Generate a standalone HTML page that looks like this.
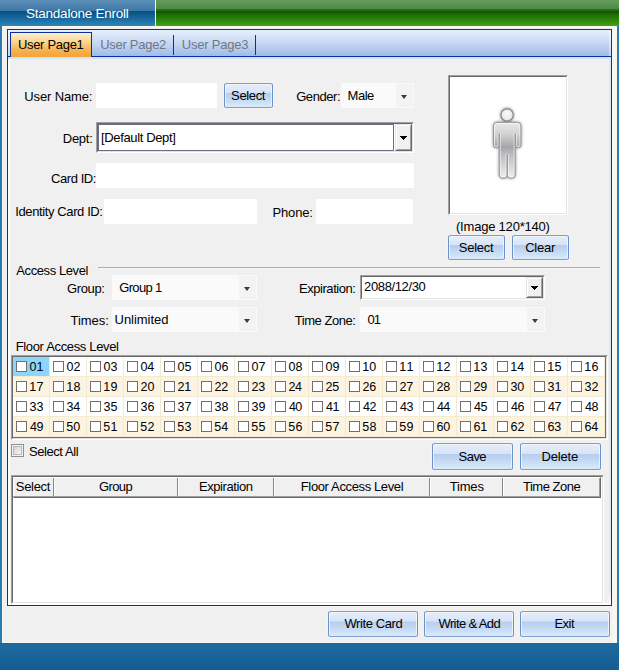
<!DOCTYPE html>
<html>
<head>
<meta charset="utf-8">
<title>Standalone Enroll</title>
<style>
html,body{margin:0;padding:0;}
body{width:619px;height:670px;overflow:hidden;position:relative;background:#f0f0f0;
 font-family:"Liberation Sans",Arial,sans-serif;font-size:13px;color:#000;}
.a{position:absolute;box-sizing:border-box;}
.t{position:absolute;white-space:nowrap;line-height:16px;font-size:13px;}
.s12{font-size:12px;}
/* window chrome */
#tb-blue{left:0;top:0;width:155px;height:26px;
 background:linear-gradient(to bottom,#5c90b9 0,#4c83ae 6px,#3d77a5 11px,#0a4b7c 11px,#0d5689 13px,#0f5d92 15px,#2f85b8 26px);}
#tb-gap{left:155px;top:0;width:1px;height:26px;background:#f4f6f8;}
#tb-green{left:156px;top:0;width:463px;height:26px;
 background:linear-gradient(to bottom,#659b5d 0,#4b8b41 9px,#2c6c1c 9px,#286818 11px,#0f5300 11px,#166100 13px,#1f7503 16px,#45a119 26px);}
#bl{left:0;top:26px;width:2px;height:617px;background:#2a7cb0;}
#br{left:617px;top:26px;width:2px;height:617px;background:#2a7cb0;}
#bb{left:0;top:643px;width:619px;height:27px;background:linear-gradient(to bottom,#0f5f98 0,#1e6ba1 1px,#135d93 27px);}
#pnl{left:2px;top:26px;width:615px;height:617px;background:#f9f6f0;}
#pnl2{left:3px;top:28px;width:609px;height:614px;background:#f0f0f0;}
/* tab control */
#tabc{left:7px;top:29px;width:605px;height:577px;border:1px solid #0c2f9c;background:#f0f0f0;}
#tabstrip{left:8px;top:30px;width:603px;height:26px;background:linear-gradient(to bottom,#e6effc 0,#c9daf5 12px,#9dbbea 26px);}
#tabline{left:8px;top:56px;width:603px;height:1px;background:#0c2f9c;}
#tablight{left:8px;top:57px;width:603px;height:2px;background:#d3e3f9;}
#tabL{left:8px;top:30px;width:2px;height:575px;background:linear-gradient(to bottom,#f4f8fe 0,#c5d7f3 26px,#dfe9f9 27px,#ffffff 31px);}
#tabR{left:609px;top:30px;width:2px;height:575px;background:linear-gradient(to bottom,#f4f8fe 0,#c5d7f3 26px,#dbe7fa 27px,#dbe7fa 560px,#fff 575px);}
#tabB{left:8px;top:603px;width:601px;height:2px;background:#fff;}
#tabU{left:7px;top:606px;width:605px;height:1px;background:#f9f6f0;}
#tab1{left:10px;top:32px;width:82px;height:25px;border:1px solid #0c2f9c;border-bottom:none;
 background:linear-gradient(to bottom,#fdf0cd 0,#fbd590 9px,#f5b04a 18px,#f2a236 25px);}
.tsep{width:1px;height:20px;top:35px;background:#0c2f9c;}
/* inputs */
.inp{background:#fff;}
.cb{background:#fafafa;}
.cbb{background:#f3f3f3;}
.arr{width:0;height:0;border-left:3.5px solid transparent;border-right:3.5px solid transparent;border-top:4px solid #3a3a3a;}
.arrk{width:0;height:0;border-left:3.5px solid transparent;border-right:3.5px solid transparent;border-top:4px solid #000;}
.sunk{border:1px solid;border-color:#a0a0a0 #fff #fff #a0a0a0;background:#fff;}
.sunk>i{position:absolute;left:0;top:0;right:0;bottom:0;border:1px solid;border-color:#696969 #e3e3e3 #e3e3e3 #696969;}
.raise{border:1px solid;border-color:#e3e3e3 #696969 #696969 #e3e3e3;background:#f0f0f0;}
.raise>i{position:absolute;left:0;top:0;right:0;bottom:0;border:1px solid;border-color:#fff #a0a0a0 #a0a0a0 #fff;}
/* buttons */
.btn{border:1px solid #7a9fd3;border-left-color:#6c92ca;border-right-color:#6c92ca;border-radius:2.5px;
 background:linear-gradient(to bottom,#e6eefb 0,#d7e3f6 39%,#b6cdee 40.5%,#c6daf3 70%,#d9ebfb 100%);
 box-shadow:inset 1px 0 0 rgba(255,255,255,.6),inset -1px 0 0 rgba(255,255,255,.6),inset 0 1px 0 rgba(255,255,255,.35),0 0 0 1px rgba(249,246,240,.45);}
.btn span{position:absolute;left:0;right:0;white-space:nowrap;line-height:16px;}
/* grid */
#grid{left:11px;top:355px;width:597px;height:85px;}
#gridk{left:13px;top:357px;width:593px;height:81px;border-right:1px solid #6d6d6d;border-bottom:1px solid #6d6d6d;}
.cell{position:absolute;width:37px;height:20px;box-sizing:border-box;border-right:1px solid #f3ead2;border-bottom:1px solid #f3ead2;font-size:12px;}
.r0,.r2{background:#fff;}
.r1,.r3{background:#fdf3e1;}
.cell b{position:absolute;left:3px;top:4px;width:11px;height:11px;box-sizing:border-box;border:1px solid #707070;background:#fff;}
.cell span{position:absolute;left:16px;top:2px;line-height:16px;font-size:12px;}
.cell.sel{background:#8dd6f9;}
/* list */
.hd{position:absolute;top:477px;height:21px;box-sizing:border-box;background:#f0f0f0;border:1px solid;border-color:#fff #858585 #696969 #fff;}
.hd>i{position:absolute;left:0;top:0;right:0;bottom:0;border-bottom:1px solid #a0a0a0;}
.hd span{position:absolute;left:0;right:0;top:1px;line-height:16px;white-space:nowrap;font-size:13px;}
</style>
</head>
<body>
<!-- title bar -->
<div class="a" id="tb-blue"></div><div class="a" id="tb-gap"></div><div class="a" id="tb-green"></div>
<div class="a" id="pnl"></div><div class="a" id="pnl2"></div>
<div class="a" id="bl"></div><div class="a" id="br"></div><div class="a" id="bb"></div>

<!-- tab control -->
<div class="a" id="tabc"></div>
<div class="a" id="tabstrip"></div>
<div class="a" id="tabL"></div><div class="a" id="tabR"></div><div class="a" id="tabB"></div><div class="a" id="tabU"></div>
<div class="a" id="tabline"></div><div class="a" id="tablight"></div>
<div class="a" id="tab1"></div>
<div class="a tsep" style="left:173px;"></div>
<div class="a tsep" style="left:255px;"></div>

<!-- row 1 -->
<div class="a inp" style="left:96px;top:83px;width:121px;height:25px;"></div>
<div class="a btn" style="left:224px;top:83px;width:49px;height:25px;"></div>
<div class="a cb" style="left:341px;top:83px;width:73px;height:25px;"></div>
<div class="a cbb" style="left:396px;top:84px;width:17px;height:23px;"></div>
<div class="a arr" style="left:400.5px;top:94.5px;"></div>

<!-- dept -->
<div class="a sunk" style="left:96px;top:122px;width:318px;height:31px;"><i></i></div>
<div class="a" style="left:98px;top:124px;width:296px;height:27px;border:1px solid #6c6c86;background:#fff;"></div>
<div class="a raise" style="left:395px;top:124px;width:17px;height:27px;"><i></i></div>
<svg class="a" style="left:400px;top:136px;" width="7" height="4" shape-rendering="crispEdges"><path d="M0 0h7v1h-1v1h-1v1h-1v1h-1v-1h-1v-1h-1v-1h-1z" fill="#000"/></svg>

<!-- card id -->
<div class="a inp" style="left:96px;top:163px;width:318px;height:25px;"></div>

<!-- identity -->
<div class="a inp" style="left:104px;top:199px;width:153px;height:25px;"></div>
<div class="a inp" style="left:316px;top:199px;width:97px;height:25px;"></div>

<!-- photo -->
<div class="a sunk" style="left:448px;top:75px;width:120px;height:140px;"><i></i></div>
<svg class="a" style="left:477.6px;top:96px;" width="58" height="94" viewBox="478 96 58 94">
 <defs>
  <linearGradient id="pg" gradientUnits="userSpaceOnUse" x1="0" y1="122" x2="0" y2="178">
   <stop offset="0" stop-color="#e9e9e9"/><stop offset="0.2" stop-color="#d4d4d5"/><stop offset="0.45" stop-color="#a6a6aa"/><stop offset="0.62" stop-color="#c2c2c5"/><stop offset="1" stop-color="#efefef"/>
  </linearGradient>
  <radialGradient id="hg" gradientUnits="userSpaceOnUse" cx="507.1" cy="114" r="7"><stop offset="0" stop-color="#fbfbfb"/><stop offset="1" stop-color="#e6e6e6"/></radialGradient>
  <filter id="gl" x="-30%" y="-30%" width="160%" height="160%"><feGaussianBlur stdDeviation="1.7"/></filter>
  <clipPath id="pc"><path d="M497 122.4H517.4A3.5 3.5 0 0 1 520.9 125.9V145.2A2.4 2.4 0 0 1 518.5 147.6H517.7A2.4 2.4 0 0 1 515.3 145.2V134L515.2 133.6L515.1 134V175A3 3 0 0 1 512.1 178H510.3A3 3 0 0 1 507.3 175V154.2L507.2 153.8L507.1 154.2V175A3 3 0 0 1 504.1 178H502.3A3 3 0 0 1 499.3 175V134L499.2 133.6L499.1 134V145.2A2.4 2.4 0 0 1 496.7 147.6H495.9A2.4 2.4 0 0 1 493.5 145.2V125.9A3.5 3.5 0 0 1 497 122.4Z"/></clipPath>
 </defs>
 <g filter="url(#gl)" fill="#505050" opacity="0.72">
  <circle cx="507.1" cy="114.9" r="6.8"/>
  <path d="M497 122.4H517.4A3.5 3.5 0 0 1 520.9 125.9V145.2A2.4 2.4 0 0 1 518.5 147.6H517.7A2.4 2.4 0 0 1 515.3 145.2V134L515.2 133.6L515.1 134V175A3 3 0 0 1 512.1 178H510.3A3 3 0 0 1 507.3 175V154.2L507.2 153.8L507.1 154.2V175A3 3 0 0 1 504.1 178H502.3A3 3 0 0 1 499.3 175V134L499.2 133.6L499.1 134V145.2A2.4 2.4 0 0 1 496.7 147.6H495.9A2.4 2.4 0 0 1 493.5 145.2V125.9A3.5 3.5 0 0 1 497 122.4Z" stroke="#5a5a5a" stroke-width="1"/>
 </g>
 <path d="M497 122.4H517.4A3.5 3.5 0 0 1 520.9 125.9V145.2A2.4 2.4 0 0 1 518.5 147.6H517.7A2.4 2.4 0 0 1 515.3 145.2V134L515.2 133.6L515.1 134V175A3 3 0 0 1 512.1 178H510.3A3 3 0 0 1 507.3 175V154.2L507.2 153.8L507.1 154.2V175A3 3 0 0 1 504.1 178H502.3A3 3 0 0 1 499.3 175V134L499.2 133.6L499.1 134V145.2A2.4 2.4 0 0 1 496.7 147.6H495.9A2.4 2.4 0 0 1 493.5 145.2V125.9A3.5 3.5 0 0 1 497 122.4Z" fill="url(#pg)"/>
 <path d="M497 122.4H517.4A3.5 3.5 0 0 1 520.9 125.9V145.2A2.4 2.4 0 0 1 518.5 147.6H517.7A2.4 2.4 0 0 1 515.3 145.2V134L515.2 133.6L515.1 134V175A3 3 0 0 1 512.1 178H510.3A3 3 0 0 1 507.3 175V154.2L507.2 153.8L507.1 154.2V175A3 3 0 0 1 504.1 178H502.3A3 3 0 0 1 499.3 175V134L499.2 133.6L499.1 134V145.2A2.4 2.4 0 0 1 496.7 147.6H495.9A2.4 2.4 0 0 1 493.5 145.2V125.9A3.5 3.5 0 0 1 497 122.4Z" fill="none" stroke="#fff" stroke-opacity="0.6" stroke-width="3" clip-path="url(#pc)"/>
 <path d="M497 122.4H517.4A3.5 3.5 0 0 1 520.9 125.9V145.2A2.4 2.4 0 0 1 518.5 147.6H517.7A2.4 2.4 0 0 1 515.3 145.2V134L515.2 133.6L515.1 134V175A3 3 0 0 1 512.1 178H510.3A3 3 0 0 1 507.3 175V154.2L507.2 153.8L507.1 154.2V175A3 3 0 0 1 504.1 178H502.3A3 3 0 0 1 499.3 175V134L499.2 133.6L499.1 134V145.2A2.4 2.4 0 0 1 496.7 147.6H495.9A2.4 2.4 0 0 1 493.5 145.2V125.9A3.5 3.5 0 0 1 497 122.4Z" fill="none" stroke="#98989b" stroke-width="1"/>
 <circle cx="507.1" cy="114.9" r="6.1" fill="url(#hg)" stroke="#8a8a8c" stroke-width="1.2"/>
</svg>
<div class="a btn" style="left:448px;top:235px;width:57px;height:25px;"></div>
<div class="a btn" style="left:512px;top:235px;width:57px;height:25px;"></div>

<!-- access level -->
<div class="a" style="left:98px;top:267px;width:502px;height:1px;background:#adadad;"></div><div class="a" style="left:98px;top:268px;width:502px;height:1px;background:#f7f7f7;"></div>
<div class="a cb" style="left:112px;top:275px;width:145px;height:25px;"></div>
<div class="a cbb" style="left:239px;top:276px;width:17px;height:23px;"></div>
<div class="a arr" style="left:243.5px;top:286.5px;"></div>
<div class="a sunk" style="left:360px;top:275px;width:185px;height:25px;"><i></i></div>
<div class="a raise" style="left:526px;top:277px;width:17px;height:21px;"><i></i></div>
<svg class="a" style="left:531px;top:286px;" width="7" height="4" shape-rendering="crispEdges"><path d="M0 0h7v1h-1v1h-1v1h-1v1h-1v-1h-1v-1h-1v-1h-1z" fill="#000"/></svg>

<div class="a cb" style="left:112px;top:307px;width:145px;height:25px;"></div>
<div class="a cbb" style="left:239px;top:308px;width:17px;height:23px;"></div>
<div class="a arr" style="left:243.5px;top:318.5px;"></div>
<div class="a cb" style="left:360px;top:307px;width:185px;height:25px;"></div>
<div class="a cbb" style="left:527px;top:308px;width:17px;height:23px;"></div>
<div class="a arr" style="left:531.5px;top:318.5px;"></div>

<!-- floor access level -->
<div class="a sunk" id="grid"><i></i></div><div class="a" id="gridk"></div>
<div class="a" id="cells" style="left:13px;top:357px;width:592px;height:80px;">
<div class="cell r0 sel" style="left:0px;top:0px;"><b></b></div>
<div class="cell r0" style="left:37px;top:0px;"><b></b></div>
<div class="cell r0" style="left:74px;top:0px;"><b></b></div>
<div class="cell r0" style="left:111px;top:0px;"><b></b></div>
<div class="cell r0" style="left:148px;top:0px;"><b></b></div>
<div class="cell r0" style="left:185px;top:0px;"><b></b></div>
<div class="cell r0" style="left:222px;top:0px;"><b></b></div>
<div class="cell r0" style="left:259px;top:0px;"><b></b></div>
<div class="cell r0" style="left:296px;top:0px;"><b></b></div>
<div class="cell r0" style="left:333px;top:0px;"><b></b></div>
<div class="cell r0" style="left:370px;top:0px;"><b></b></div>
<div class="cell r0" style="left:407px;top:0px;"><b></b></div>
<div class="cell r0" style="left:444px;top:0px;"><b></b></div>
<div class="cell r0" style="left:481px;top:0px;"><b></b></div>
<div class="cell r0" style="left:518px;top:0px;"><b></b></div>
<div class="cell r0" style="left:555px;top:0px;"><b></b></div>
<div class="cell r1" style="left:0px;top:20px;"><b></b></div>
<div class="cell r1" style="left:37px;top:20px;"><b></b></div>
<div class="cell r1" style="left:74px;top:20px;"><b></b></div>
<div class="cell r1" style="left:111px;top:20px;"><b></b></div>
<div class="cell r1" style="left:148px;top:20px;"><b></b></div>
<div class="cell r1" style="left:185px;top:20px;"><b></b></div>
<div class="cell r1" style="left:222px;top:20px;"><b></b></div>
<div class="cell r1" style="left:259px;top:20px;"><b></b></div>
<div class="cell r1" style="left:296px;top:20px;"><b></b></div>
<div class="cell r1" style="left:333px;top:20px;"><b></b></div>
<div class="cell r1" style="left:370px;top:20px;"><b></b></div>
<div class="cell r1" style="left:407px;top:20px;"><b></b></div>
<div class="cell r1" style="left:444px;top:20px;"><b></b></div>
<div class="cell r1" style="left:481px;top:20px;"><b></b></div>
<div class="cell r1" style="left:518px;top:20px;"><b></b></div>
<div class="cell r1" style="left:555px;top:20px;"><b></b></div>
<div class="cell r2" style="left:0px;top:40px;"><b></b></div>
<div class="cell r2" style="left:37px;top:40px;"><b></b></div>
<div class="cell r2" style="left:74px;top:40px;"><b></b></div>
<div class="cell r2" style="left:111px;top:40px;"><b></b></div>
<div class="cell r2" style="left:148px;top:40px;"><b></b></div>
<div class="cell r2" style="left:185px;top:40px;"><b></b></div>
<div class="cell r2" style="left:222px;top:40px;"><b></b></div>
<div class="cell r2" style="left:259px;top:40px;"><b></b></div>
<div class="cell r2" style="left:296px;top:40px;"><b></b></div>
<div class="cell r2" style="left:333px;top:40px;"><b></b></div>
<div class="cell r2" style="left:370px;top:40px;"><b></b></div>
<div class="cell r2" style="left:407px;top:40px;"><b></b></div>
<div class="cell r2" style="left:444px;top:40px;"><b></b></div>
<div class="cell r2" style="left:481px;top:40px;"><b></b></div>
<div class="cell r2" style="left:518px;top:40px;"><b></b></div>
<div class="cell r2" style="left:555px;top:40px;"><b></b></div>
<div class="cell r3" style="left:0px;top:60px;"><b></b></div>
<div class="cell r3" style="left:37px;top:60px;"><b></b></div>
<div class="cell r3" style="left:74px;top:60px;"><b></b></div>
<div class="cell r3" style="left:111px;top:60px;"><b></b></div>
<div class="cell r3" style="left:148px;top:60px;"><b></b></div>
<div class="cell r3" style="left:185px;top:60px;"><b></b></div>
<div class="cell r3" style="left:222px;top:60px;"><b></b></div>
<div class="cell r3" style="left:259px;top:60px;"><b></b></div>
<div class="cell r3" style="left:296px;top:60px;"><b></b></div>
<div class="cell r3" style="left:333px;top:60px;"><b></b></div>
<div class="cell r3" style="left:370px;top:60px;"><b></b></div>
<div class="cell r3" style="left:407px;top:60px;"><b></b></div>
<div class="cell r3" style="left:444px;top:60px;"><b></b></div>
<div class="cell r3" style="left:481px;top:60px;"><b></b></div>
<div class="cell r3" style="left:518px;top:60px;"><b></b></div>
<div class="cell r3" style="left:555px;top:60px;"><b></b></div>
</div>

<!-- select all / save / delete -->
<div class="a" style="left:11px;top:444px;width:13px;height:13px;border:1px solid #8e8f8f;background:#f4f4f4;"></div><div class="a" style="left:13px;top:446px;width:9px;height:9px;border:1px solid #b7b8ba;background:linear-gradient(135deg,#d0d1d3 0,#e6e6e6 50%,#f7f7f7 100%);"></div>
<div class="a btn" style="left:432px;top:443px;width:81px;height:27px;"></div>
<div class="a btn" style="left:520px;top:443px;width:81px;height:27px;"></div>

<!-- list -->
<div class="a sunk" style="left:11px;top:475px;width:593px;height:129px;"><i></i></div>

<div class="a" style="left:13px;top:477px;width:588px;height:21px;background:#f0f0f0;border-top:1px solid #fff;border-left:1px solid #fff;border-bottom:1px solid #696969;border-right:1px solid #696969;"></div>
<div class="a" style="left:13px;top:496px;width:587px;height:1px;background:#a0a0a0;"></div>
<div class="a" style="left:599px;top:478px;width:1px;height:19px;background:#a0a0a0;"></div>
<div class="a" style="left:53px;top:478px;width:2px;height:18px;background:linear-gradient(to right,#858585 0,#858585 1px,#fff 1px,#fff 2px);"></div>
<div class="a" style="left:177px;top:478px;width:2px;height:18px;background:linear-gradient(to right,#858585 0,#858585 1px,#fff 1px,#fff 2px);"></div>
<div class="a" style="left:273px;top:478px;width:2px;height:18px;background:linear-gradient(to right,#858585 0,#858585 1px,#fff 1px,#fff 2px);"></div>
<div class="a" style="left:429px;top:478px;width:2px;height:18px;background:linear-gradient(to right,#858585 0,#858585 1px,#fff 1px,#fff 2px);"></div>
<div class="a" style="left:502px;top:478px;width:2px;height:18px;background:linear-gradient(to right,#858585 0,#858585 1px,#fff 1px,#fff 2px);"></div>

<!-- bottom buttons -->
<div class="a btn" style="left:328px;top:611px;width:90px;height:26px;"></div>
<div class="a btn" style="left:424px;top:611px;width:90px;height:26px;"></div>
<div class="a btn" style="left:520px;top:611px;width:90px;height:26px;"></div>
<!-- texts -->
<div class="t" style="left:26.1px;top:6px;letter-spacing:-0.25px;color:#fff;font-size:13.5px;">Standalone Enroll</div>
<div class="t" style="left:17.9px;top:37px;letter-spacing:-0.3px;">User Page1</div>
<div class="t" style="left:100.2px;top:37px;letter-spacing:-0.28px;color:#76767e;">User Page2</div>
<div class="t" style="left:181.8px;top:37px;letter-spacing:-0.21px;color:#76767e;">User Page3</div>
<div class="t" style="left:24.3px;top:89px;letter-spacing:-0.13px;">User Name:</div>
<div class="t" style="left:231.1px;top:88px;letter-spacing:-0.36px;">Select</div>
<div class="t" style="left:296.2px;top:89px;letter-spacing:-0.43px;">Gender:</div>
<div class="t" style="left:347.6px;top:88px;letter-spacing:-0.49px;">Male</div>
<div class="t" style="left:62.8px;top:131px;letter-spacing:-0.28px;">Dept:</div>
<div class="t" style="left:101.0px;top:130px;letter-spacing:-0.36px;">[Default Dept]</div>
<div class="t" style="left:51.0px;top:171px;letter-spacing:-0.43px;">Card ID:</div>
<div class="t" style="left:15.3px;top:204px;letter-spacing:-0.39px;">Identity Card ID:</div>
<div class="t" style="left:272.4px;top:205px;letter-spacing:-0.13px;">Phone:</div>
<div class="t" style="left:456.0px;top:219px;letter-spacing:-0.21px;">(Image 120*140)</div>
<div class="t" style="left:458.8px;top:240px;letter-spacing:-0.25px;">Select</div>
<div class="t" style="left:525.2px;top:240px;letter-spacing:-0.26px;">Clear</div>
<div class="t" style="left:16.3px;top:263px;letter-spacing:-0.41px;">Access Level</div>
<div class="t" style="left:67.1px;top:281px;letter-spacing:-0.4px;">Group:</div>
<div class="t" style="left:119.2px;top:280px;letter-spacing:-0.64px;">Group 1</div>
<div class="t" style="left:299.0px;top:281px;letter-spacing:-0.45px;">Expiration:</div>
<div class="t" style="left:364.1px;top:279px;letter-spacing:-0.38px;">2088/12/30</div>
<div class="t" style="left:70.6px;top:313px;letter-spacing:-0.06px;">Times:</div>
<div class="t" style="left:114.6px;top:312px;letter-spacing:-0.05px;">Unlimited</div>
<div class="t" style="left:294.8px;top:313px;letter-spacing:-0.46px;">Time Zone:</div>
<div class="t" style="left:367.4px;top:312px;letter-spacing:-0.76px;">01</div>
<div class="t" style="left:15.7px;top:339px;letter-spacing:-0.34px;">Floor Access Level</div>
<div class="t" style="left:29.0px;top:444px;letter-spacing:-0.43px;">Select All</div>
<div class="t" style="left:458.6px;top:449px;letter-spacing:-0.55px;">Save</div>
<div class="t" style="left:541.6px;top:449px;letter-spacing:-0.18px;">Delete</div>
<div class="t" style="left:15.8px;top:479px;letter-spacing:-0.32px;">Select</div>
<div class="t" style="left:99.1px;top:479px;letter-spacing:-0.63px;">Group</div>
<div class="t" style="left:198.9px;top:479px;letter-spacing:-0.4px;">Expiration</div>
<div class="t" style="left:300.8px;top:479px;letter-spacing:-0.37px;">Floor Access Level</div>
<div class="t" style="left:449.7px;top:479px;letter-spacing:-0.17px;">Times</div>
<div class="t" style="left:523.0px;top:479px;letter-spacing:-0.5px;">Time Zone</div>
<div class="t" style="left:344.4px;top:616px;letter-spacing:-0.4px;">Write Card</div>
<div class="t" style="left:438.5px;top:616px;letter-spacing:-0.62px;">Write &amp; Add</div>
<div class="t" style="left:554.4px;top:616px;letter-spacing:-0.48px;">Exit</div>
<div class="t" style="left:29.6px;top:359px;letter-spacing:-0.11px;font-size:12.5px;">01</div>
<div class="t" style="left:66.6px;top:359px;letter-spacing:-0.05px;font-size:12.5px;">02</div>
<div class="t" style="left:103.6px;top:359px;letter-spacing:-0.11px;font-size:12.5px;">03</div>
<div class="t" style="left:140.6px;top:359px;letter-spacing:-0.33px;font-size:12.5px;">04</div>
<div class="t" style="left:177.6px;top:359px;letter-spacing:-0.11px;font-size:12.5px;">05</div>
<div class="t" style="left:214.6px;top:359px;letter-spacing:-0.06px;font-size:12.5px;">06</div>
<div class="t" style="left:251.6px;top:359px;letter-spacing:-0.05px;font-size:12.5px;">07</div>
<div class="t" style="left:288.6px;top:359px;letter-spacing:-0.11px;font-size:12.5px;">08</div>
<div class="t" style="left:325.6px;top:359px;letter-spacing:-0.06px;font-size:12.5px;">09</div>
<div class="t" style="left:362.2px;top:359px;letter-spacing:0.1px;font-size:12.5px;">10</div>
<div class="t" style="left:399.2px;top:359px;letter-spacing:1.24px;font-size:12.5px;">11</div>
<div class="t" style="left:436.2px;top:359px;letter-spacing:0.29px;font-size:12.5px;">12</div>
<div class="t" style="left:473.2px;top:359px;letter-spacing:0.24px;font-size:12.5px;">13</div>
<div class="t" style="left:510.2px;top:359px;font-size:12.5px;">14</div>
<div class="t" style="left:547.2px;top:359px;letter-spacing:0.25px;font-size:12.5px;">15</div>
<div class="t" style="left:584.2px;top:359px;letter-spacing:0.31px;font-size:12.5px;">16</div>
<div class="t" style="left:29.2px;top:379px;letter-spacing:0.29px;font-size:12.5px;">17</div>
<div class="t" style="left:66.2px;top:379px;letter-spacing:0.24px;font-size:12.5px;">18</div>
<div class="t" style="left:103.2px;top:379px;letter-spacing:0.27px;font-size:12.5px;">19</div>
<div class="t" style="left:140.4px;top:379px;letter-spacing:0.04px;font-size:12.5px;">20</div>
<div class="t" style="left:177.4px;top:379px;letter-spacing:-0.04px;font-size:12.5px;">21</div>
<div class="t" style="left:214.4px;top:379px;letter-spacing:0.02px;font-size:12.5px;">22</div>
<div class="t" style="left:251.4px;top:379px;letter-spacing:-0.04px;font-size:12.5px;">23</div>
<div class="t" style="left:288.4px;top:379px;letter-spacing:-0.27px;font-size:12.5px;">24</div>
<div class="t" style="left:325.4px;top:379px;letter-spacing:-0.04px;font-size:12.5px;">25</div>
<div class="t" style="left:362.4px;top:379px;letter-spacing:0.02px;font-size:12.5px;">26</div>
<div class="t" style="left:399.4px;top:379px;letter-spacing:0.02px;font-size:12.5px;">27</div>
<div class="t" style="left:436.4px;top:379px;letter-spacing:-0.04px;font-size:12.5px;">28</div>
<div class="t" style="left:473.4px;top:379px;letter-spacing:0.02px;font-size:12.5px;">29</div>
<div class="t" style="left:510.4px;top:379px;letter-spacing:-0.04px;font-size:12.5px;">30</div>
<div class="t" style="left:547.4px;top:379px;letter-spacing:0.12px;font-size:12.5px;">31</div>
<div class="t" style="left:584.4px;top:379px;letter-spacing:0.16px;font-size:12.5px;">32</div>
<div class="t" style="left:29.4px;top:399px;letter-spacing:0.12px;font-size:12.5px;">33</div>
<div class="t" style="left:66.4px;top:399px;letter-spacing:-0.12px;font-size:12.5px;">34</div>
<div class="t" style="left:103.4px;top:399px;letter-spacing:0.12px;font-size:12.5px;">35</div>
<div class="t" style="left:140.4px;top:399px;letter-spacing:0.16px;font-size:12.5px;">36</div>
<div class="t" style="left:177.4px;top:399px;letter-spacing:0.16px;font-size:12.5px;">37</div>
<div class="t" style="left:214.4px;top:399px;letter-spacing:0.12px;font-size:12.5px;">38</div>
<div class="t" style="left:251.4px;top:399px;letter-spacing:0.16px;font-size:12.5px;">39</div>
<div class="t" style="left:288.9px;top:399px;letter-spacing:-0.56px;font-size:12.5px;">40</div>
<div class="t" style="left:325.9px;top:399px;letter-spacing:-0.41px;font-size:12.5px;">41</div>
<div class="t" style="left:362.9px;top:399px;letter-spacing:-0.38px;font-size:12.5px;">42</div>
<div class="t" style="left:399.9px;top:399px;letter-spacing:-0.41px;font-size:12.5px;">43</div>
<div class="t" style="left:436.9px;top:399px;letter-spacing:-0.67px;font-size:12.5px;">44</div>
<div class="t" style="left:473.9px;top:399px;letter-spacing:-0.41px;font-size:12.5px;">45</div>
<div class="t" style="left:510.9px;top:399px;letter-spacing:-0.38px;font-size:12.5px;">46</div>
<div class="t" style="left:547.9px;top:399px;letter-spacing:-0.38px;font-size:12.5px;">47</div>
<div class="t" style="left:584.9px;top:399px;letter-spacing:-0.43px;font-size:12.5px;">48</div>
<div class="t" style="left:29.9px;top:419px;letter-spacing:-0.38px;font-size:12.5px;">49</div>
<div class="t" style="left:66.3px;top:419px;letter-spacing:0.04px;font-size:12.5px;">50</div>
<div class="t" style="left:103.3px;top:419px;letter-spacing:0.2px;font-size:12.5px;">51</div>
<div class="t" style="left:140.3px;top:419px;letter-spacing:0.24px;font-size:12.5px;">52</div>
<div class="t" style="left:177.3px;top:419px;letter-spacing:0.2px;font-size:12.5px;">53</div>
<div class="t" style="left:214.3px;top:419px;letter-spacing:-0.04px;font-size:12.5px;">54</div>
<div class="t" style="left:251.3px;top:419px;letter-spacing:0.2px;font-size:12.5px;">55</div>
<div class="t" style="left:288.3px;top:419px;letter-spacing:0.24px;font-size:12.5px;">56</div>
<div class="t" style="left:325.3px;top:419px;letter-spacing:0.24px;font-size:12.5px;">57</div>
<div class="t" style="left:362.3px;top:419px;letter-spacing:0.2px;font-size:12.5px;">58</div>
<div class="t" style="left:399.3px;top:419px;letter-spacing:0.24px;font-size:12.5px;">59</div>
<div class="t" style="left:436.4px;top:419px;letter-spacing:-0.14px;font-size:12.5px;">60</div>
<div class="t" style="left:473.4px;top:419px;letter-spacing:0.02px;font-size:12.5px;">61</div>
<div class="t" style="left:510.4px;top:419px;letter-spacing:0.08px;font-size:12.5px;">62</div>
<div class="t" style="left:547.4px;top:419px;letter-spacing:0.02px;font-size:12.5px;">63</div>
<div class="t" style="left:584.4px;top:419px;letter-spacing:-0.21px;font-size:12.5px;">64</div>
</body>
</html>
